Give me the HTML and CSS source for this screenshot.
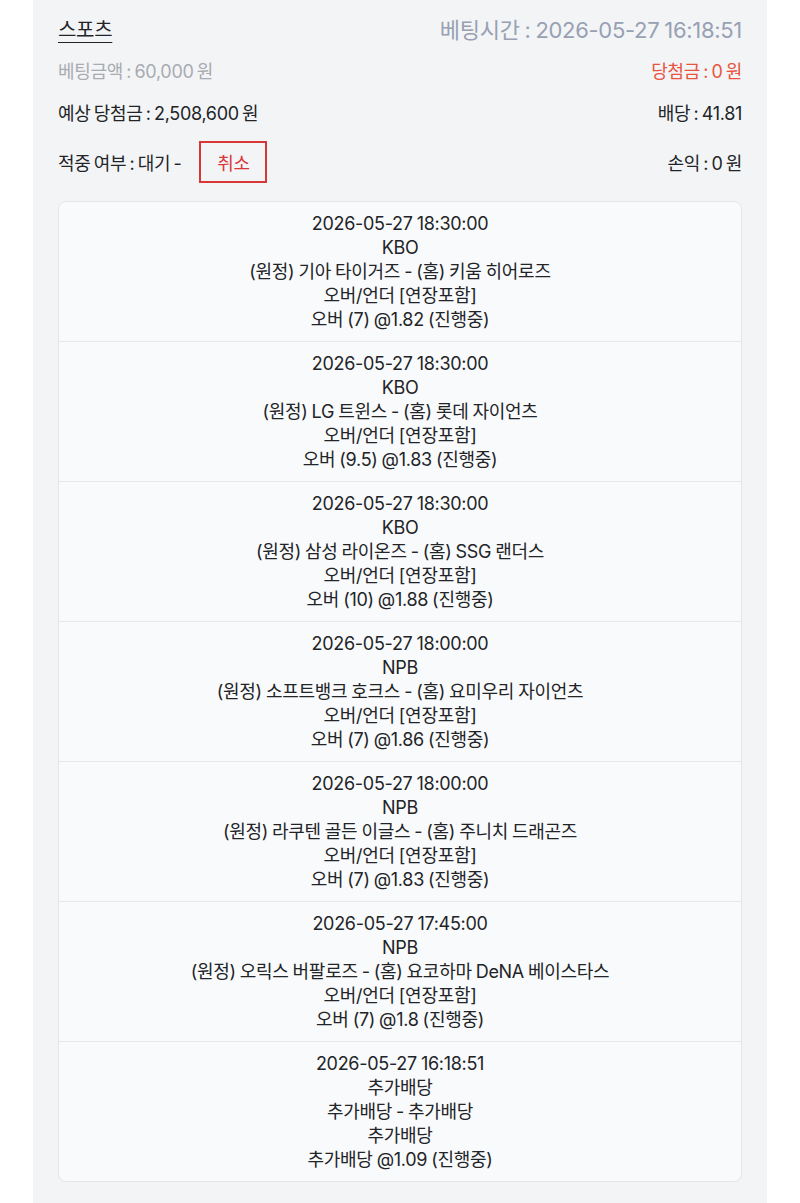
FILE: index.html
```html
<!DOCTYPE html>
<html lang="ko">
<head>
<meta charset="utf-8">
<link rel="stylesheet" href="styles.css">
</head>
<body>
<div class="panel">
  <div class="header">
    <div class="row">
      <span class="title">스포츠</span>
      <span class="time">베팅시간 : 2026-05-27 16:18:51</span>
    </div>
    <div class="row">
      <span class="muted">베팅금액 : 60,000 원</span>
      <span class="win">당첨금 : 0 원</span>
    </div>
    <div class="row">
      <span>예상 당첨금 : 2,508,600 원</span>
      <span>배당 : 41.81</span>
    </div>
    <div class="row row-status">
      <span class="status">적중 여부 : 대기 - <button class="cancel">취소</button></span>
      <span>손익 : 0 원</span>
    </div>
  </div>
  <div class="card">
    <div class="item">
      <div>2026-05-27 18:30:00</div>
      <div>KBO</div>
      <div>(원정) 기아 타이거즈 - (홈) 키움 히어로즈</div>
      <div>오버/언더 [연장포함]</div>
      <div>오버 (7) @1.82 (진행중)</div>
    </div>
    <div class="item">
      <div>2026-05-27 18:30:00</div>
      <div>KBO</div>
      <div>(원정) LG 트윈스 - (홈) 롯데 자이언츠</div>
      <div>오버/언더 [연장포함]</div>
      <div>오버 (9.5) @1.83 (진행중)</div>
    </div>
    <div class="item">
      <div>2026-05-27 18:30:00</div>
      <div>KBO</div>
      <div>(원정) 삼성 라이온즈 - (홈) SSG 랜더스</div>
      <div>오버/언더 [연장포함]</div>
      <div>오버 (10) @1.88 (진행중)</div>
    </div>
    <div class="item">
      <div>2026-05-27 18:00:00</div>
      <div>NPB</div>
      <div>(원정) 소프트뱅크 호크스 - (홈) 요미우리 자이언츠</div>
      <div>오버/언더 [연장포함]</div>
      <div>오버 (7) @1.86 (진행중)</div>
    </div>
    <div class="item">
      <div>2026-05-27 18:00:00</div>
      <div>NPB</div>
      <div>(원정) 라쿠텐 골든 이글스 - (홈) 주니치 드래곤즈</div>
      <div>오버/언더 [연장포함]</div>
      <div>오버 (7) @1.83 (진행중)</div>
    </div>
    <div class="item">
      <div>2026-05-27 17:45:00</div>
      <div>NPB</div>
      <div>(원정) 오릭스 버팔로즈 - (홈) 요코하마 DeNA 베이스타스</div>
      <div>오버/언더 [연장포함]</div>
      <div>오버 (7) @1.8 (진행중)</div>
    </div>
    <div class="item">
      <div>2026-05-27 16:18:51</div>
      <div>추가배당</div>
      <div>추가배당 - 추가배당</div>
      <div>추가배당</div>
      <div>추가배당 @1.09 (진행중)</div>
    </div>
  </div>
</div>
</body>
</html>
```

FILE: styles.css
```css
html, body {
  margin: 0;
  padding: 0;
  background: #ffffff;
}

body {
  font-family: "Inter", "Noto Sans CJK KR", sans-serif;
  color: #222428;
  font-size: 18px;
  letter-spacing: -0.3px;
}

.panel {
  margin: 0 33px;
  min-height: 1203px;
  background: #f3f4f6;
  padding: 8px 25px 0;
  box-sizing: border-box;
}

.header {
  display: flex;
  flex-direction: column;
  gap: 2px;
  word-spacing: -1.5px;
}

.row {
  display: flex;
  justify-content: space-between;
  align-items: center;
  height: 40px;
}

.row-status {
  height: 42px;
  margin-top: 7px;
}

.title {
  font-size: 20px;
  text-decoration: underline;
  text-underline-offset: 5px;
  text-decoration-thickness: 1px;
}

.time {
  font-size: 22px;
  color: #97a1b3;
  word-spacing: -1px;
}

.muted {
  color: #a8abb0;
}

.win {
  color: #e8553e;
}

.status {
  display: flex;
  align-items: center;
}

.cancel {
  margin-left: 18px;
  width: 68px;
  height: 42px;
  border: 2px solid #d8373a;
  background: transparent;
  color: #d8373a;
  font-family: inherit;
  font-size: 18px;
  letter-spacing: inherit;
  padding: 0;
}

.card {
  margin-top: 18px;
  background: #f9fafb;
  border: 1px solid #e3e5e9;
  border-radius: 8px;
}

.item {
  padding: 10px 0;
  height: 140px;
  box-sizing: border-box;
  text-align: center;
  line-height: 24px;
  word-spacing: -0.7px;
  border-top: 1px solid #e6e8eb;
}

.item:first-child {
  border-top: none;
  height: 139px;
}
```
